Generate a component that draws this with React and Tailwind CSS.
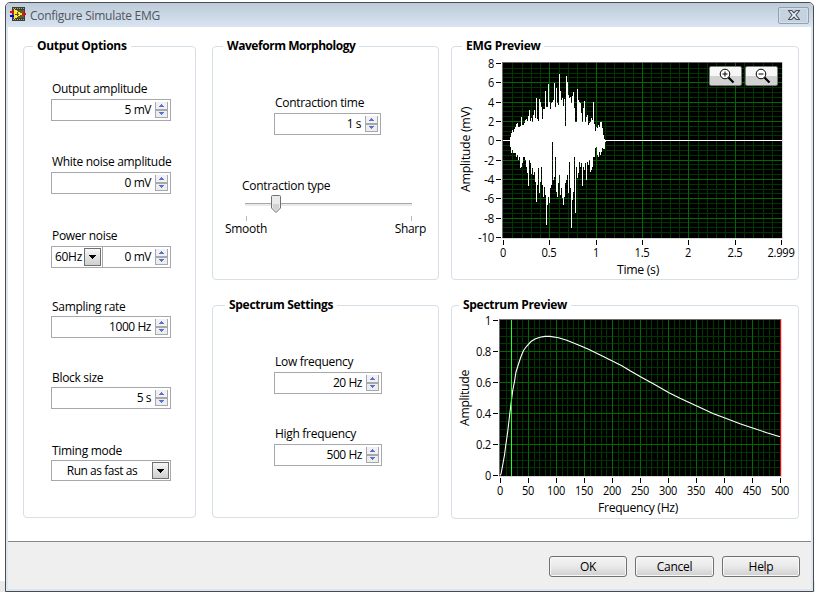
import clsx from 'clsx';

// Peak heights of each one-pixel column of the contraction burst
const BURST_TOP = [
  232, 218, 210, 215, 208, 200, 192, 190, 202, 200, 198, 171, 195, 196, 190, 180, 178, 184, 168, 150, 183, 173, 186,
  165, 150, 175, 115, 178, 183, 117, 125, 140, 178, 148, 148, 92, 140, 142, 72, 125, 147, 130, 125, 120, 70, 140, 85,
  130, 135, 42, 92, 120, 115, 137, 117, 198, 48, 65, 105, 115, 110, 128, 108, 95, 145, 185, 185, 87, 120, 125, 130,
  160, 187, 143, 122, 185, 170, 165, 195, 190, 185, 175, 180, 125, 192, 212, 200, 205, 195, 200, 185, 185, 205, 225,
  236, 240,
];
const BURST_BOTTOM = [
  262, 278, 270, 278, 280, 280, 290, 285, 300, 290, 325, 320, 310, 290, 290, 300, 322, 340, 378, 300, 310, 342, 325,
  345, 335, 365, 425, 375, 325, 400, 365, 320, 375, 410, 380, 405, 495, 435, 410, 430, 385, 375, 245, 360, 350, 290,
  395, 410, 370, 345, 405, 385, 415, 435, 410, 370, 360, 345, 400, 305, 385, 505, 420, 395, 290, 460, 320, 355, 340,
  305, 320, 310, 378, 320, 330, 310, 360, 305, 315, 300, 335, 330, 320, 290, 290, 265, 260, 285, 290, 275, 285, 275,
  265, 268, 268, 246,
];

const burstPath = BURST_TOP.map((top, i) => {
  const y1 = Math.round(60 + top / 3);
  const y2 = Math.round(60 + BURST_BOTTOM[i] / 3);
  return `M${510 + i} ${y1}h1V${y2}h-1z`;
}).join('');

const SPECTRUM_POINTS =
  '500,475.5 501,474 502.5,466 504.5,455 505.8,445 507.8,431 509.5,416 511.5,400 512.8,390 514.5,381.5 516,372 518.5,364 521,356.5 523.5,350.5 526.8,346 531,341.5 535,339 540,337.3 545,336.4 550,336.4 558.5,337.7 566.8,340.3 578.5,345 588.5,349.3 601.8,355.7 611.8,360.7 621.8,365.7 630.5,371 640.5,376.8 655.5,385 668.5,392.5 680,398.3 696.8,406 713.5,413.7 725,418 740,423.7 753.5,428.3 766.8,432.7 780,436.7';

const range = (n) => Array.from({ length: n }, (_, i) => i);

function GroupBox({ title, className, legendClass, children }) {
  return (
    <fieldset className={clsx('relative min-w-0 rounded-[4px] border border-[#d5dfe5]', className)}>
      <legend
        className={clsx(
          'h-[17px] px-1 text-[12px] leading-[16px] font-bold tracking-[-0.3px] whitespace-nowrap',
          legendClass
        )}
      >
        {title}
      </legend>
      {children}
    </fieldset>
  );
}

function Spinner() {
  return (
    <svg width="13" height="16" viewBox="0 0 13 16" shapeRendering="crispEdges" className="shrink-0">
      <rect width="13" height="16" fill="#a6a8ae" />
      <rect x="1" y="0" width="11" height="7" fill="#f1f1f3" />
      <rect x="1" y="9" width="11" height="6" fill="#ededee" />
      <path d="M6 2h1v1h1v1h1v1H4V4h1V3h1z" fill="#5c72c8" />
      <path d="M4 10h5v1H8v1H7v1H6v-1H5v-1H4z" fill="#5c72c8" />
    </svg>
  );
}

function ArrowButton({ className }) {
  return (
    <span
      className={clsx(
        'flex w-[17px] shrink-0 items-center justify-center border border-[#6f6f6f] bg-linear-to-b from-[#f6f6f6] to-[#cfcfcf]',
        className
      )}
    >
      <svg width="7" height="4" viewBox="0 0 7 4" shapeRendering="crispEdges">
        <path d="M0 0h7v1H6v1H5v1H4v1H3V3H2V2H1V1H0z" fill="#000" />
      </svg>
    </span>
  );
}

function Label({ children, low }) {
  return (
    <div className={clsx('h-[17px] pl-px whitespace-nowrap', low ? 'leading-[16px]' : 'leading-[14px]')}>
      {children}
    </div>
  );
}

function NumberField({ label, value, className, low }) {
  return (
    <div className={className}>
      <Label low={low}>{label}</Label>
      <div className="flex h-[22px] items-center justify-end gap-[4px] border border-[#a6a8ae] bg-white pr-[2px]">
        <span className="leading-[16px] tracking-[-0.45px]">{value}</span>
        <Spinner />
      </div>
    </div>
  );
}

function Grid({ left, top, right, bottom, xs, ys }) {
  return (
    <g shapeRendering="crispEdges">
      <rect x={left} y={top} width={right - left} height={bottom - top} fill="#000" />
      {[false, true].map((major) => (
        <g key={String(major)} fill={major ? '#006a00' : '#003600'}>
          {xs
            .filter((l) => l.major === major && l.at > left)
            .map((l) => (
              <rect key={`x${l.at}`} x={Math.round(l.at)} y={top} width="1" height={bottom - top} />
            ))}
          {ys
            .filter((l) => l.major === major && l.at > top && l.at < bottom - 1.5)
            .map((l) => (
              <rect key={`y${l.at}`} x={left} y={Math.round(l.at)} width={right - left} height="1" />
            ))}
        </g>
      ))}
    </g>
  );
}

function Frame({ left, top, right, bottom }) {
  return (
    <g shapeRendering="crispEdges">
      <rect x={left} y={top} width={right - left} height="1" fill="#6a6a6a" />
      <rect x={left} y={top} width="1" height={bottom - top} fill="#6a6a6a" />
      <rect x={right} y={top} width="1" height={bottom - top + 1} fill="#d9d9d9" />
      <rect x={left} y={bottom} width={right - left} height="1" fill="#d9d9d9" />
    </g>
  );
}

function TickText({ x, y, anchor = 'middle', children }) {
  const text = String(children);
  const dots = (text.match(/\./g) || []).length;
  const dashes = (text.match(/-/g) || []).length;
  return (
    <text
      x={x}
      y={y}
      textAnchor={anchor}
      textLength={(text.length - dots - dashes) * 6 + dots * 3 + dashes * 4}
      lengthAdjust="spacingAndGlyphs"
    >
      {text}
    </text>
  );
}

function EmgChart() {
  const xs = range(30).map((i) => ({ at: 503 + i * 9.27, major: i % 5 === 0 }));
  const ys = range(37).map((i) => ({ at: 63 + i * 4.833, major: i % 4 === 0 }));
  const xLabels = ['0', '0.5', '1', '1.5', '2', '2.5', '2.999'];
  return (
    <svg width="346" height="224" viewBox="452 55 346 224" className="block overflow-visible text-[12px]">
      <Grid left={503} top={63} right={782} bottom={238} xs={xs} ys={ys} />
      <rect x="503" y="140" width="279" height="1" fill="#fff" shapeRendering="crispEdges" />
      <path d={burstPath} fill="#fff" shapeRendering="crispEdges" />
      <Frame left={502} top={62} right={782} bottom={238} />
      {range(10).map((i) => {
        const y = Math.round(63 + i * 19.33);
        return (
          <g key={i}>
            <rect x="496" y={y} width="5" height="1" />
            <TickText x={494} y={y + 5} anchor="end">
              {8 - i * 2}
            </TickText>
          </g>
        );
      })}
      {xLabels.map((label, i) => {
        const x = Math.round(503 + i * 46.35);
        return (
          <g key={label}>
            <rect x={x} y="240" width="1" height="5" />
            <TickText x={x} y={257}>
              {label}
            </TickText>
          </g>
        );
      })}
      <text x="617" y="274" textLength="42" lengthAdjust="spacingAndGlyphs">
        Time (s)
      </text>
      <text transform="translate(470 192) rotate(-90)" textLength="85" lengthAdjust="spacingAndGlyphs">
        Amplitude (mV)
      </text>
    </svg>
  );
}

function SpectrumChart() {
  const xs = range(51).map((i) => ({ at: 500 + i * 5.6, major: i % 5 === 0 }));
  const ys = range(21).map((i) => ({ at: 320 + i * 7.75, major: i % 4 === 0 }));
  const yLabels = ['1', '0.8', '0.6', '0.4', '0.2', '0'];
  return (
    <svg width="346" height="204" viewBox="452 314 346 204" className="block overflow-visible text-[12px]">
      <Grid left={500} top={320} right={781} bottom={476} xs={xs} ys={ys} />
      <polyline points={SPECTRUM_POINTS} fill="none" stroke="#fff" strokeWidth="1.1" />
      <rect x="511" y="320" width="1" height="156" fill="#1dff2c" />
      <Frame left={499} top={319} right={781} bottom={476} />
      <rect x="780" y="320" width="1" height="156" fill="#f00" />
      {yLabels.map((label, i) => {
        const y = 320 + i * 31;
        return (
          <g key={label}>
            <rect x="493" y={y} width="5" height="1" />
            <TickText x={491} y={y + 5} anchor="end">
              {label}
            </TickText>
          </g>
        );
      })}
      {range(11).map((i) => (
        <g key={i}>
          <rect x={500 + i * 28} y="478" width="1" height="5" />
          <TickText x={500 + i * 28} y={495}>
            {i * 50}
          </TickText>
        </g>
      ))}
      <text x="598" y="512" textLength="80" lengthAdjust="spacingAndGlyphs">
        Frequency (Hz)
      </text>
      <text transform="translate(469 426) rotate(-90)" textLength="56" lengthAdjust="spacingAndGlyphs">
        Amplitude
      </text>
    </svg>
  );
}

function ZoomButton({ plus }) {
  return (
    <button className="flex h-5 w-[33px] items-center justify-center rounded-[2px] border border-[#7a7a7a] bg-linear-to-b from-[#f7f7f7] from-50% to-[#d2d2d2] to-50%">
      <svg width="16" height="16" viewBox="0 0 16 16" fill="none" stroke="#000" className="ml-[2px]">
        <circle cx="6" cy="6" r="4.8" fill="#fff" />
        <path d={plus ? 'M3.500 6h5M6 3.500v5' : 'M3.500 6h5'} />
        <path d="M9.500 9.500l5 5" strokeWidth="2.2" />
      </svg>
    </button>
  );
}

function DialogButton({ children, className }) {
  return (
    <button
      className={clsx(
        'h-[21px] rounded-[3px] border border-[#707070] bg-linear-to-b from-[#f4f4f4] from-0% via-[#e9e9e9] via-50% to-[#cfcfcf] to-100% leading-[18px] shadow-[inset_0_0_0_1px_#f8f8f8]',
        className
      )}
    >
      {children}
    </button>
  );
}

function TitleBar() {
  return (
    <div className="flex h-[23px] items-center bg-linear-to-b from-[#bdcad8] to-[#d7e3f0] pr-[4px] pl-[4px]">
      <svg width="16" height="15" viewBox="0 0 16 15" shapeRendering="crispEdges" className="-mt-px">
        <rect x="2" width="13" height="14" fill="#3d3d35" />
        <path d="M3 1.5h12M3 12.5h12" stroke="#aaa995" strokeDasharray="1 1" />
        <rect x="3" y="3" width="11" height="8" fill="#5d5b35" />
        <path d="M4 2l9 5-9 5z" fill="#ffe92e" />
        <path d="M5 7h4M7 5v4" stroke="#5e5000" />
        <path d="M0 5h4M12 7h4" stroke="#f00" strokeWidth="1.5" />
        <path d="M0 9h4" stroke="#00f" strokeWidth="1.5" />
      </svg>
      <span className="ml-[4px] flex-1 pt-[3px] tracking-[-0.27px] text-[#4f565e]">Configure Simulate EMG</span>
      <button className="mt-px flex h-[17px] w-[31px] items-center justify-center rounded-[2px] border border-[#93a1af] bg-[#c5d2df] shadow-[inset_0_0_0_1px_#d4dfea]">
        <svg width="12" height="10" viewBox="0 0 12 10">
          <path
            d="M.5.5h3.200L6 2.900 8.300.5h3.200L8 5l3.500 4.500H8.300L6 7.100 3.700 9.500H.5L4 5z"
            fill="#eef2f6"
            stroke="#4d5564"
            strokeWidth="1.200"
          />
        </svg>
      </button>
    </div>
  );
}

export default function App() {
  return (
    <div className="flex h-[592px] w-[815px] flex-col bg-white bg-linear-to-b from-white from-[581px] to-[#e9e9e9] to-[581px] pt-[2px] pr-px pl-[5px] font-['Open_Sans','Noto_Sans',sans-serif] text-[12px] leading-4 tracking-[-0.3px] text-black">
      <div className="flex h-[590px] flex-col overflow-hidden rounded-t-[5px] border border-[#494c50] bg-[#dce6f1]">
        <TitleBar />
        <div className="mx-[2px] mt-px flex h-[514px] shrink-0 items-start bg-white pt-[11px] pl-[15px]">
          <GroupBox title="Output Options" className="h-[480px] w-[173px]" legendClass="ml-[9px]">
            <div className="ml-[27px] w-[120px] pt-[27px]">
              <NumberField label="Output amplitude" value="5 mV" />
              <NumberField label="White noise amplitude" value="0 mV" className="mt-[34px]" />
              <div className="mt-[35px]">
                <Label>Power noise</Label>
                <div className="flex h-[22px] items-center border border-[#a6a8ae] bg-white pr-[2px]">
                  <span className="w-[32px] pl-[3px] leading-[16px]">60Hz</span>
                  <ArrowButton className="h-[18px]" />
                  <span className="ml-px h-full w-px bg-[#a6a8ae]" />
                  <span className="mr-[4px] flex-1 text-right leading-[16px] tracking-[-0.45px]">0 mV</span>
                  <Spinner />
                </div>
              </div>
              <NumberField low label="Sampling rate" value="1000 Hz" className="mt-[31px]" />
              <NumberField low label="Block size" value="5 s" className="mt-[32px]" />
              <div className="mt-[34px]">
                <Label low>Timing mode</Label>
                <div className="flex h-[21px] items-center border border-[#a6a8ae] bg-white pr-px">
                  <span className="flex-1 text-center leading-[16px] tracking-[-0.45px]">Run as fast as</span>
                  <ArrowButton className="h-[17px]" />
                </div>
              </div>
            </div>
          </GroupBox>

          <div className="ml-[16px] flex w-[227px] flex-col">
            <GroupBox title="Waveform Morphology" className="h-[242px]" legendClass="ml-[10px] tracking-[-0.45px]">
              <NumberField
                label="Contraction time"
                value="1 s"
                className="ml-[61px] w-[107px] pt-[41px]"
              />
              <div className="ml-[12px] w-[201px] pt-[43px]">
                <div className="pl-[16px]">
                  <Label low>Contraction type</Label>
                </div>
                <svg width="201" height="27" viewBox="225 195 201 27" className="block">
                  <g shapeRendering="crispEdges">
                    <rect x="245" y="203" width="167" height="3" fill="#e8ebeb" />
                    <rect x="245" y="203" width="167" height="1" fill="#a8a8a8" />
                    <path d="M246 216h1v5h-1zM411 216h1v5h-1z" fill="#bbb" />
                  </g>
                  <path
                    d="M271.500 196.500q0-1 1-1h7q1 0 1 1v11.500l-4.500 4.500-4.500-4.500z"
                    fill="#eaeaea"
                    stroke="#707070"
                  />
                  <path d="M273 204h6v4l-3 3-3-3z" fill="#d2d2d2" />
                </svg>
                <div className="flex justify-between leading-[14px]">
                  <span>Smooth</span>
                  <span>Sharp</span>
                </div>
              </div>
            </GroupBox>
            <GroupBox title="Spectrum Settings" className="mt-[17px] h-[221px]" legendClass="ml-[12px]">
              <div className="ml-[61px] w-[108px] pt-[41px]">
                <NumberField label="Low frequency" value="20 Hz" />
                <NumberField label="High frequency" value="500 Hz" className="mt-[33px]" />
              </div>
            </GroupBox>
          </div>

          <div className="ml-[12px] flex w-[348px] flex-col">
            <GroupBox title="EMG Preview" className="h-[242px]" legendClass="ml-[10px]">
              <EmgChart />
              <div className="absolute top-[11px] right-[20px] flex gap-[3px]">
                <ZoomButton plus />
                <ZoomButton />
              </div>
            </GroupBox>
            <GroupBox title="Spectrum Preview" className="mt-[17px] h-[222px]" legendClass="ml-[7px]">
              <SpectrumChart />
            </GroupBox>
          </div>
        </div>
        <div className="mx-[2px] flex h-[48px] shrink-0 justify-end gap-[8px] border-t border-[#87888c] bg-[#efefef] pt-[14px] pr-[11px]">
          <DialogButton className="w-[78px]">OK</DialogButton>
          <DialogButton className="w-[79px]">Cancel</DialogButton>
          <DialogButton className="w-[78px]">Help</DialogButton>
        </div>
      </div>
    </div>
  );
}
